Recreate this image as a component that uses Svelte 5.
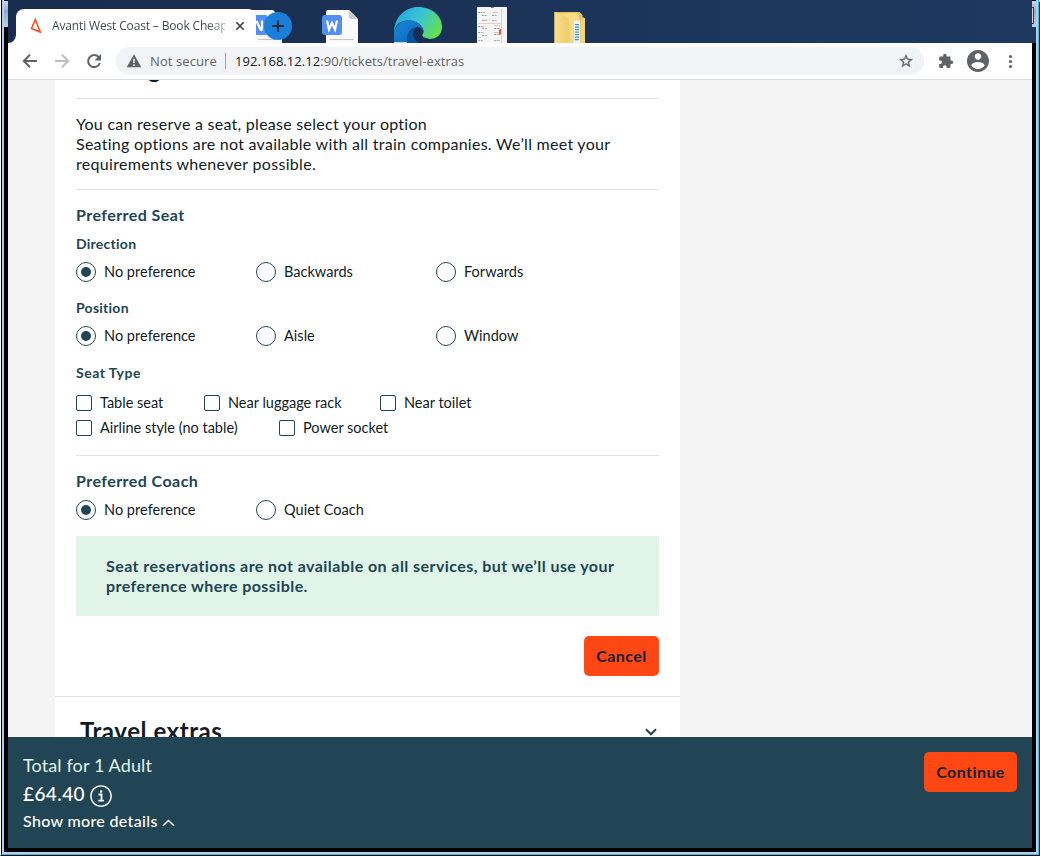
<script>
  const directions = ['No preference', 'Backwards', 'Forwards'];
  const positions = ['No preference', 'Aisle', 'Window'];
  const coaches = ['No preference', 'Quiet Coach'];
</script>

{#snippet radios(items, name)}
  <div class="radios" role="radiogroup" aria-label={name}>
    {#each items as item, i}
      <div class="radio"><span class="ring">{#if i === 0}<span class="dot"></span>{/if}</span><span class="label">{item}</span></div>
    {/each}
  </div>
{/snippet}

<div class="edge-a"><div class="edge-b"><div class="edge-c">
  <div class="window">
    <header class="desktop">
      <div class="side"><i class="glass"></i></div>
      <div class="strip">
        <svg class="wall" width="1024" height="43" viewBox="8 0 1024 43">
          <defs>
            <linearGradient id="navy"><stop offset="0" stop-color="#182c4e" /><stop offset=".5" stop-color="#1b3357" /><stop offset="1" stop-color="#1e3960" /></linearGradient>
            <linearGradient id="edgeTop" x1="0" x2="1" y1="0" y2=".55"><stop offset="0" stop-color="#249ee0" /><stop offset=".5" stop-color="#38c2d6" /><stop offset="1" stop-color="#64e052" /></linearGradient>
            <linearGradient id="edgeLow" x1="0" x2="1" y1="0" y2="1"><stop offset="0" stop-color="#1689dc" /><stop offset="1" stop-color="#0f62b0" /></linearGradient>
            <linearGradient id="fold"><stop offset="0" stop-color="#f8df8c" /><stop offset="1" stop-color="#edcc6a" /></linearGradient>
          </defs>
          <rect x="8" width="1024" height="43" fill="url(#navy)" />
          <path d="M250 10h23l9 9v24h-32z" fill="#f8f8f8" />
          <rect x="248" y="15" width="20" height="20" rx="3" fill="#538ff0" />
          <path d="M256.500 21l4 8.500q1.500 1 1.500-1v-8" fill="none" stroke="#fff" stroke-width="2.200" />
          <path d="M258 39.500h18" stroke="#c6c6c6" />
          <path d="M326 12q0-2 2-2h21l9 9v24h-32z" fill="#fafafa" />
          <path d="M349 10v7q0 2 2 2h7z" fill="#c9cbd0" />
          <rect x="322" y="15" width="20" height="20" rx="3" fill="#538ff0" />
          <path d="M327 20.500l2 9 3-6.500 3 6.500 2-9" fill="none" stroke="#fff" stroke-width="2.200" />
          <path d="M330 39.500h24" stroke="#c6c6c6" />
          <path d="M394 43V31C395 16 406 7 418 7C432 7 442 16 442 27C442 35 436 39 430 39C425 39 422 37 422 35C424 33 424 31 423 29C420 22 409 17 399 23C395 26 394 31 394 35Z" fill="url(#edgeTop)" />
          <path d="M394 43V32C396 23 405 18 413 21C420 23 424 28 423 32C422 27 414 26 410 31C407 35 407 39 409 43Z" fill="url(#edgeLow)" />
          <path d="M407 43C406 33 411 27 418 27C412 31 413 38 419 43Z" fill="#0c5298" />
          <path d="M418 43C412 37 412 30 417 26.500C421 27 423.500 30 423 32.500C421.500 34.500 422 36.500 424 37.500L432 39.500V43Z" fill="#172f54" />
          <path d="M394 42.500h13" stroke="#c5d3df" />
          <rect x="477" y="7" width="30" height="36" fill="#f5f5f5" />
          <path d="M501.500 9v34M478 23.500h23" stroke="#f3c8c3" fill="none" />
          <path d="M478 12.500h7M482 15.500h5M492 15.500h5M482 20.500h5M492 20.500h5M478 26.500h6M482 28.500h5M478 32.500h6M482 35.500h5M478 40.500h5M494 28.500h6M494 34.500h6M494 40.500h6" stroke="#a5a5a5" stroke-dasharray="2 .7" />
          <path d="M493 12.500h5M494 25.500h6M494 32.500h6M478 37.500h3" stroke="#f4b8b2" />
          <path d="M499 30l2-1.500v6h-2z" fill="#e8513f" /><path d="M491 7.500h3" stroke="#478adf" />
          <path d="M554.500 12h25l3 3v2l2 1v25h-30z" fill="#e7c260" />
          <path d="M555 14l20-1 4 2v28h-24z" fill="#f6dc86" />
          <path d="M574 21l6-1v23h-6z" fill="#eef5f8" />
          <path d="M577 24v17" stroke="#3f98c4" stroke-width="4" stroke-dasharray="1.300 1.200" />
          <path d="M554.500 12l10 4q5 1 5 7v20h-15z" fill="url(#fold)" />
          <path d="M581 19l4-1v25h-5z" fill="#f2d47a" />
        </svg>
        <div class="tab">
          <svg width="14" height="18" viewBox="0 0 14 18"><path d="M6.300 2.500L11.200 15 2.500 11.500Z" fill="none" stroke="#ff4b1f" stroke-width="1.600" /></svg>
          <span class="title">Avanti West Coast – Book Cheap</span>
          <svg class="x" width="10" height="10" viewBox="0 0 10 10"><path d="M1.300 1.300l7.400 7.400M8.700 1.300L1.300 8.700" stroke="#3c4043" stroke-width="1.600" /></svg>
        </div>
        <svg class="flare" width="8" height="8" viewBox="0 0 8 8"><path d="M8 0v8H0A8 8 0 0 0 8 0" fill="#fff" /></svg>
        <svg class="plus" width="28" height="28" viewBox="0 0 28 28"><circle cx="14" cy="14" r="14" fill="#1a7fd8" /><path d="M14 8.200v11.600M8.200 14h11.600" stroke="#202a38" stroke-width="2" /></svg>
      </div>
      <div class="side right"><i class="glass"></i><i class="red"></i></div>
    </header>

    <div class="viewport">
      <nav class="toolbar">
        <svg width="108" height="36" viewBox="8 43 108 36" fill="none" stroke-width="2">
          <path d="M37 61H24.500M30 54.800L23.800 61l6.200 6.200" stroke="#5f6368" />
          <path d="M55 61h12.500M62 54.800l6.200 6.200-6.200 6.200" stroke="#bcbec1" />
          <path d="M98.700 57.200A6 6 0 1 0 99.800 63" stroke="#5f6368" /><path d="M101 54v6.500h-6.500z" fill="#5f6368" />
        </svg>
        <div class="omnibox">
          <svg class="warn" width="16" height="14" viewBox="0 0 16 14"><path d="M8 .3L15.300 13.300H.7z" fill="#5f6368" /><path d="M8 4.800v4.200M8 10.300v1.700" stroke="#f1f3f4" stroke-width="1.500" /></svg>
          <span class="secure">Not secure</span><span class="bar"></span>
          <span class="url"><b>192.168.12.12</b><span class="path">:90/tickets/travel-extras</span></span>
          <svg class="star" width="16" height="16" viewBox="0 0 24 24"><path fill="#5f6368" stroke="#5f6368" stroke-width=".5" d="M22 9.240l-7.190-.62L12 2 9.190 8.630 2 9.240l5.460 4.730L5.820 21 12 17.270 18.180 21l-1.630-7.030L22 9.240zM12 15.400l-3.760 2.270 1-4.280-3.320-2.880 4.380-.38L12 6.100l1.710 4.040 4.380.38-3.320 2.880 1 4.280L12 15.400z" /></svg>
        </div>
        <svg width="108" height="36" viewBox="924 43 108 36" fill="#5f6368">
          <path transform="translate(937.800 53.200) scale(.67)" d="M20.500 11H19V7c0-1.100-.9-2-2-2h-4V3.500C13 2.120 11.880 1 10.500 1S8 2.120 8 3.500V5H4c-1.100 0-1.990.9-1.990 2v3.800H3.500c1.490 0 2.700 1.210 2.700 2.700s-1.210 2.700-2.700 2.700H2V20c0 1.100.9 2 2 2h3.800v-1.500c0-1.490 1.210-2.700 2.700-2.700 1.490 0 2.700 1.210 2.700 2.700V22H17c1.100 0 2-.9 2-2v-4h1.500c1.380 0 2.500-1.120 2.500-2.500S21.880 11 20.500 11z" />
          <path transform="translate(964.800 47.800) scale(1.100)" d="M12 2C6.480 2 2 6.480 2 12s4.480 10 10 10 10-4.480 10-10S17.520 2 12 2zm0 3c1.660 0 3 1.340 3 3s-1.340 3-3 3-3-1.340-3-3 1.340-3 3-3zm0 14.200c-2.500 0-4.710-1.280-6-3.220.03-1.990 4-3.080 6-3.080 1.990 0 5.970 1.090 6 3.080-1.290 1.940-3.500 3.220-6 3.220z" />
          <circle cx="1010.500" cy="56.500" r="1.600" /><circle cx="1010.500" cy="61.500" r="1.600" /><circle cx="1010.500" cy="66.500" r="1.600" />
        </svg>
      </nav>

      <main class="page">
        <section class="card">
          <h2 class="seating"><span>Seating</span></h2>
          <div class="inner">
            <p class="intro">You can reserve a seat, please select your option<br />Seating options are not available with all train companies. We’ll meet your<br /><span class="l3">requirements whenever possible.</span></p>
            <h3>Preferred Seat</h3>
            <h4 class="dir">Direction</h4>
            {@render radios(directions, 'Direction')}
            <h4 class="pos">Position</h4>
            {@render radios(positions, 'Position')}
            <h4 class="type">Seat Type</h4>
            <div class="checks">
              <div class="check w128"><i></i>Table seat</div><div class="check w176"><i></i>Near luggage rack</div><div class="check"><i></i>Near toilet</div>
            </div>
            <div class="checks">
              <div class="check w203"><i></i>Airline style (no table)</div><div class="check"><i></i>Power socket</div>
            </div>
            <h3 class="coach">Preferred Coach</h3>
            {@render radios(coaches, 'Coach')}
            <p class="notice">Seat reservations are not available on all services, but we’ll use your<br />preference where possible.</p>
            <div class="actions"><button class="cancel">Cancel</button></div>
          </div>
          <div class="extras"><h2>Travel extras</h2><svg width="12" height="8" viewBox="0 0 12 8"><path d="M1 1.300l5 5 5-5" fill="none" stroke="#214555" stroke-width="2" /></svg></div>
        </section>
      </main>

      <footer class="total">
        <div>
          <div class="sum">Total for 1 Adult</div>
          <div class="price"><span>£64.40</span><svg width="22" height="22" viewBox="0 0 22 22" fill="none" stroke="#fff"><circle cx="11" cy="11" r="10.100" stroke-width="1.400" /><path d="M8.500 9.500h3V15.500M8.300 15.700h5.600" stroke-width="1.800" /><path d="M10 6.500h2.200" stroke-width="2.200" /></svg></div>
          <div class="more"><span>Show more details</span><svg width="13" height="8" viewBox="0 0 13 8"><path d="M1 6.800l5.500-5.300L12 6.800" fill="none" stroke="#fff" stroke-width="1.500" /></svg></div>
        </div>
        <button class="continue">Continue</button>
      </footer>
    </div>
  </div>
</div></div></div>

<style>
  :global(body) { margin: 0; background: #fff; overflow: hidden; }
  * { box-sizing: border-box; }
  svg { display: block; flex: none; }
  h2, h3, h4, p { margin: 0; }
  .edge-a { width: 1040px; height: 856px; border: solid #000; border-width: 0 1px 1px 0; border-left: 1px solid #fff; border-top-right-radius: 4px; font-family: Lato, sans-serif; color: #101b26; }
  .edge-b { height: 100%; border: solid #26c6e6; border-width: 0 1px 1px 0; border-left: 1px solid #000; }
  .edge-c { height: 100%; border: 2px solid #b9cbe8; border-top: 0; }
  .window { height: 100%; display: flex; flex-direction: column; background: #000; }
  .desktop { display: flex; height: 43px; flex: none; }
  .side { width: 4px; position: relative; background: #000; }
  .side.right { background: #1e3960; }
  .glass { display: block; width: 4px; height: 27px; border-top: 1px solid #111; background: linear-gradient(#c8d9ec, #8eabcf 40%, #b8d1ec); }
  .red { position: absolute; left: 0; top: 7px; width: 2px; height: 17px; background: #e8c5c0; border: 1px solid #672e38; border-left: 0; }
  .strip { width: 1024px; position: relative; overflow: hidden; display: flex; padding: 9px 0 0 8px; }
  .wall { position: absolute; left: 0; top: 0; }
  .tab { position: relative; width: 240px; height: 34px; background: #fff; border-radius: 8px 8px 0 0; display: flex; align-items: center; padding-left: 13px; }
  .title { font: 12px/18px "Open Sans", sans-serif; color: #45494d; width: 173px; margin-left: 9px; white-space: nowrap; overflow: hidden; letter-spacing: -.15px; -webkit-mask-image: linear-gradient(90deg, #000 155px, #0006 173px); mask-image: linear-gradient(90deg, #000 155px, #0006 173px); }
  .x { margin-left: 10px; }
  .flare { position: absolute; left: 0; bottom: 0; }
  .plus { position: absolute; left: 256px; top: 12px; }
  .viewport { flex: 1; margin: 0 4px 4px; display: flex; flex-direction: column; min-height: 0; background: #f4f4f4; }
  .toolbar { height: 37px; flex: none; display: flex; background: #fff; border-bottom: 1px solid #dadce0; }
  .omnibox { width: 808px; height: 28px; margin-top: 4px; border-radius: 14px; background: #f1f3f4; display: flex; align-items: center; padding: 0 10px; font: 13px/20px "Open Sans", sans-serif; color: #5f6368; white-space: nowrap; }
  .secure { margin-left: 8px; width: 75px; letter-spacing: .1px; }
  .bar { width: 1px; height: 16px; background: #9aa0a6; margin-right: 9px; }
  .url { letter-spacing: .05px; }
  .url b { font-weight: 400; color: #202124; }
  .star { margin-left: auto; }
  .page { flex: 1; min-height: 0; overflow: hidden; padding-left: 47px; }
  .card { width: 625px; height: 700px; background: #fff; }
  .seating { height: 18px; overflow: hidden; padding-left: 26px; font-size: 24px; line-height: 30px; }
  .seating span { display: block; margin-top: -26px; }
  .inner { padding: 0 21px; height: 599px; border-bottom: 1px solid #dfe3e5; }
  .intro { border: solid #dfe3e5; border-width: 1px 0; height: 92px; padding-top: 15px; font-size: 16px; line-height: 20px; white-space: nowrap; letter-spacing: .27px; }
  .l3 { letter-spacing: .31px; }
  h3 { font-size: 16px; line-height: 20px; color: #214555; margin-top: 15px; letter-spacing: .44px; }
  h4 { font-size: 14px; line-height: 20px; color: #214555; letter-spacing: .25px; }
  .dir { margin: 9px 0 8px; }
  .pos { margin: 16px 0 8px; }
  .type { margin: 17px 0 7px; letter-spacing: .5px; }
  .radios { display: flex; height: 20px; }
  .radio { width: 180px; display: flex; gap: 8px; font-size: 14.500px; line-height: 20px; letter-spacing: .03px; }
  .ring { width: 20px; height: 20px; border: 1px solid #214555; border-radius: 50%; display: grid; place-items: center; }
  .dot { width: 10px; height: 10px; border-radius: 50%; background: #214555; }
  .checks { display: flex; height: 25px; font-size: 14.500px; line-height: 25px; white-space: nowrap; }
  .check { display: flex; align-items: center; gap: 8px; }
  .check i { width: 16px; height: 16px; border: 1px solid #214555; border-radius: 2px; }
  .w128 { width: 128px; } .w176 { width: 176px; } .w203 { width: 203px; }
  .coach { border-top: 1px solid #dfe3e5; margin: 15px 0 9px; padding-top: 15px; }
  .notice { margin: 16px 0 20px; height: 80px; padding: 20px 30px; background: #e0f4e8; color: #214555; font-size: 16px; line-height: 20px; font-weight: 700; letter-spacing: .43px; white-space: nowrap; }
  .actions { display: flex; justify-content: flex-end; }
  button { height: 40px; border: 0; border-radius: 5px; padding: 0; background: #ff4713; font: 700 16px/20px Lato, sans-serif; letter-spacing: .45px; color: #17202a; }
  .cancel { width: 75px; }
  .continue { width: 93px; }
  .extras { display: flex; justify-content: space-between; align-items: center; padding: 0 23px 0 25px; height: 70px; }
  .extras h2 { font-size: 24px; line-height: 30px; letter-spacing: .55px; margin-top: -3px; }
  .total { height: 111px; flex: none; background: #214555; color: #fff; display: flex; justify-content: space-between; padding: 15px 15px 0; }
  .sum { font-size: 18px; line-height: 26px; letter-spacing: .12px; color: #e0f4e8; }
  .price { display: flex; gap: 5px; align-items: center; font-size: 19px; line-height: 30px; height: 32px; letter-spacing: .4px; font-weight: 500; }
  .price svg { margin-top: 3px; }
  .more { display: flex; gap: 4px; align-items: center; font-size: 16px; line-height: 22px; font-weight: 500; letter-spacing: .33px; }
  .more svg { margin-top: 4px; }
</style>
